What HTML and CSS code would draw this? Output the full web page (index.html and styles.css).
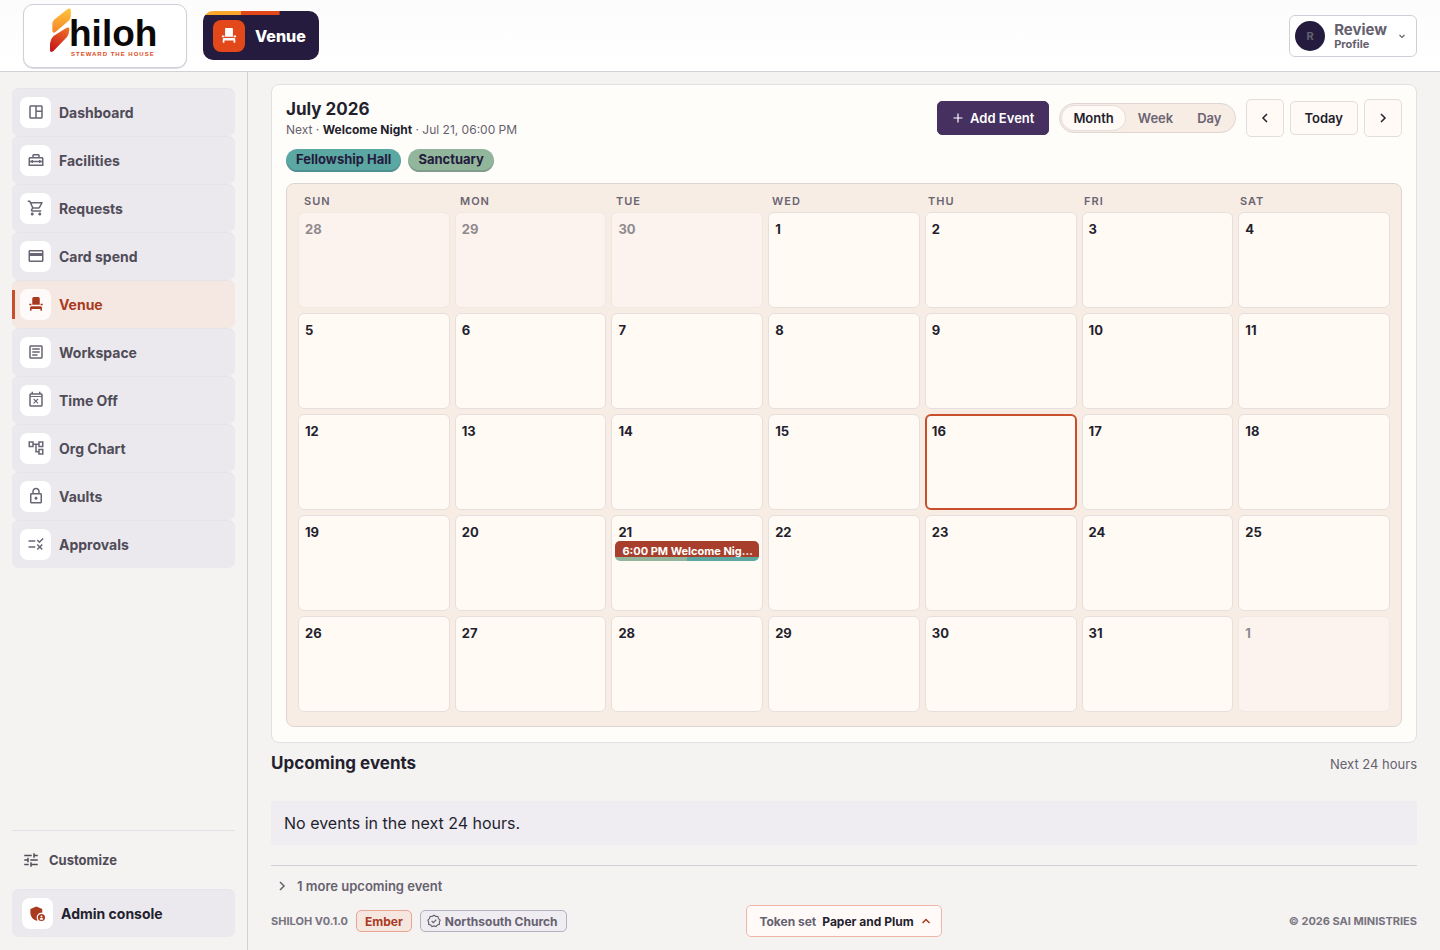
FILE: index.html
```
<!DOCTYPE html>
<html lang="en">
<head>
    <meta charset="UTF-8" />
    <meta name="viewport" content="width=device-width, initial-scale=1" />
    <title>Shiloh - Venue</title>
    <link rel="stylesheet" href="styles.css">
</head>
<body>
    <header class="topbar">
        <a class="logo" href="#" aria-label="Shiloh">
            <svg width="110" height="56" viewBox="0 0 110 56">
                <defs>
                    <linearGradient id="flame-top" x1="0" y1="0" x2="0" y2="1">
                        <stop offset="0" stop-color="#fdc43a" />
                        <stop offset="1" stop-color="#f6862a" />
                    </linearGradient>
                    <linearGradient id="flame-bottom" x1="0.7" y1="0" x2="0.3" y2="1">
                        <stop offset="0" stop-color="#ee6a24" />
                        <stop offset="1" stop-color="#c4161c" />
                    </linearGradient>
                </defs>
                <path fill="url(#flame-top)" d="M17 1.500Q20.800-1 20.800 2.500V8q0 3-2.500 5L5.500 24Q2.300 26 2.300 22v-5.500q0-3 2-5z" />
                <path fill="url(#flame-bottom)" d="M15.500 20.500Q19.500 18 19.300 21.500 19 26.500 17 29L3.500 43Q0 45.500 0 42v-6.500q.3-4.500 3.500-7.500z" />
                <text class="logo-name" x="19" y="38">hiloh</text>
                <text class="logo-tag" x="21" y="48">STEWARD THE HOUSE</text>
            </svg>
        </a>
        <div class="module">
            <span class="module-icon">
                <svg class="icon" width="20" height="20" viewBox="0 0 24 24"><path d="M7.300 3.500q0-1 1-1h7.400q1 0 1 1V13H7.300zM3.500 11.500h3v2h-3zM17.500 11.500h3v2h-3zM4.500 20v-4q0-1.500 1.500-1.500h12q1.500 0 1.500 1.500v4h-2v-2.500h-11V20z" /></svg>
            </span>
            <span class="module-name">Venue</span>
        </div>
        <button class="profile" type="button">
            <span class="avatar">R</span>
            <span class="profile-text">
                <span class="profile-name">Review</span>
                <span class="profile-label">Profile</span>
            </span>
            <svg class="line thin" width="12" height="12" viewBox="0 0 12 12"><path d="M3.500 5L6 7.500 8.500 5" /></svg>
        </button>
    </header>

    <div class="layout">
        <aside class="sidebar">
            <nav class="nav">
                <a class="nav-item" href="#"><span class="nav-icon"><svg class="icon" width="18" height="18" viewBox="0 0 24 24"><path d="M19 3H5c-1.100 0-2 .9-2 2v14c0 1.100.9 2 2 2h14c1.100 0 2-.9 2-2V5c0-1.100-.9-2-2-2zM5 19V5h6v14H5zm14 0h-6v-7h6v7zm0-9h-6V5h6v5z" /></svg></span>Dashboard</a>
                <a class="nav-item" href="#"><span class="nav-icon"><svg class="icon" width="18" height="18" viewBox="0 0 24 24"><path d="M20 8h-3V6c0-1.100-.9-2-2-2H9c-1.100 0-2 .9-2 2v2H4c-1.100 0-2 .9-2 2v10h20V10c0-1.100-.9-2-2-2zM9 6h6v2H9V6zm11 12H4v-3h2v1h2v-1h8v1h2v-1h2v3zm-2-5v-1h-2v1H8v-1H6v1H4v-3h16v3h-2z" /></svg></span>Facilities</a>
                <a class="nav-item" href="#"><span class="nav-icon"><svg class="icon" width="18" height="18" viewBox="0 0 24 24"><path d="M15.550 13c.75 0 1.410-.41 1.750-1.030l3.580-6.490A.996.996 0 0 0 20.010 4H5.210l-.94-2H1v2h2l3.600 7.590-1.350 2.440C4.520 15.370 5.480 17 7 17h12v-2H7l1.100-2h7.450zM6.160 6h12.150l-2.760 5H8.530L6.160 6zM7 18c-1.100 0-1.990.9-1.990 2S5.900 22 7 22s2-.9 2-2-.9-2-2-2zm10 0c-1.100 0-1.990.9-1.990 2s.89 2 1.990 2 2-.9 2-2-.9-2-2-2z" /></svg></span>Requests</a>
                <a class="nav-item" href="#"><span class="nav-icon"><svg class="icon" width="18" height="18" viewBox="0 0 24 24"><path d="M20 4H4c-1.110 0-1.990.89-1.990 2L2 18c0 1.110.89 2 2 2h16c1.110 0 2-.89 2-2V6c0-1.110-.89-2-2-2zm0 14H4v-6h16v6zm0-10H4V6h16v2z" /></svg></span>Card spend</a>
                <a class="nav-item active" href="#"><span class="nav-icon"><svg class="icon" width="18" height="18" viewBox="0 0 24 24"><path d="M7 4.500q0-2 2-2h6q2 0 2 2V13H7zM3 11.500h3v2H3zM18 11.500h3v2h-3zM4 21v-4q0-2 2-2h12q2 0 2 2v4h-2v-2.500H6V21z" /></svg></span>Venue</a>
                <a class="nav-item" href="#"><span class="nav-icon"><svg class="icon" width="18" height="18" viewBox="0 0 24 24"><path d="M19 5v14H5V5h14m0-2H5c-1.100 0-2 .9-2 2v14c0 1.100.9 2 2 2h14c1.100 0 2-.9 2-2V5c0-1.100-.9-2-2-2zM14 17H7v-2h7v2zm3-4H7v-2h10v2zm0-4H7V7h10v2z" /></svg></span>Workspace</a>
                <a class="nav-item" href="#"><span class="nav-icon"><svg class="icon" width="18" height="18" viewBox="0 0 24 24"><path d="M9.310 17l2.440-2.440L14.190 17l1.060-1.060-2.440-2.440 2.440-2.440L14.190 10l-2.440 2.440L9.310 10l-1.060 1.060 2.440 2.440-2.440 2.440L9.310 17zM19 3h-1V1h-2v2H8V1H6v2H5c-1.110 0-1.990.9-1.990 2L3 19c0 1.100.89 2 2 2h14c1.100 0 2-.9 2-2V5c0-1.100-.9-2-2-2zm0 16H5V8h14v11zM5 6.500V5h14v1.500z" /></svg></span>Time Off</a>
                <a class="nav-item" href="#"><span class="nav-icon"><svg class="icon" width="18" height="18" viewBox="0 0 24 24"><path d="M22 11V3h-7v3H9V3H2v8h7V8h2v10h4v3h7v-8h-7v3h-2V8h2v3h7zM7 9H4V5h3v4zm10 6h3v4h-3v-4zm0-10h3v4h-3V5z" /></svg></span>Org Chart</a>
                <a class="nav-item" href="#"><span class="nav-icon"><svg class="icon" width="18" height="18" viewBox="0 0 24 24"><path d="M18 8h-1V6c0-2.760-2.240-5-5-5S7 3.240 7 6v2H6c-1.100 0-2 .9-2 2v10c0 1.100.9 2 2 2h12c1.100 0 2-.9 2-2V10c0-1.100-.9-2-2-2zM9 6c0-1.660 1.340-3 3-3s3 1.340 3 3v2H9V6zm9 14H6V10h12v10zm-6-3c1.100 0 2-.9 2-2s-.9-2-2-2-2 .9-2 2 .9 2 2 2z" /></svg></span>Vaults</a>
                <a class="nav-item" href="#"><span class="nav-icon"><svg class="icon" width="18" height="18" viewBox="0 0 24 24"><path d="M16.540 11L13 7.460l1.410-1.410 2.120 2.120 4.240-4.240 1.410 1.410L16.540 11zM11 7H2v2h9V7zm10 6.410L19.590 12 17 14.590 14.410 12 13 13.410 15.590 16 13 18.590 14.410 20 17 17.410 19.590 20 21 18.590 18.410 16 21 13.410zM11 15H2v2h9v-2z" /></svg></span>Approvals</a>
            </nav>
            <div class="sidebar-bottom">
                <button class="customize" type="button">
                    <svg class="icon" width="18" height="18" viewBox="0 0 24 24"><path d="M3 17v2h6v-2H3zM3 5v2h10V5H3zm10 16v-2h8v-2h-8v-2h-2v6h2zM7 9v2H3v2h4v2h2V9H7zm14 4v-2H11v2h10zm-6-4h2V7h4V5h-4V3h-2v6z" /></svg>
                    Customize
                </button>
                <a class="nav-item admin" href="#"><span class="nav-icon"><svg class="icon" width="19" height="19" viewBox="0 0 24 24"><path d="M17 11c.34 0 .67.04 1 .09V6.270L10.500 3 3 6.270v4.910c0 4.540 3.200 8.790 7.500 9.820.55-.13 1.080-.32 1.600-.55A5.970 5.970 0 0 1 11 17c0-3.310 2.690-6 6-6z" /><path d="M17 12.500a4.500 4.500 0 1 0 0 9 4.500 4.500 0 0 0 0-9zm0 1.900a1.300 1.300 0 1 1 0 2.600 1.300 1.300 0 0 1 0-2.600zm0 5.600c-.95 0-1.800-.5-2.300-1.200.1-.6 1.400-1 2.300-1s2.200.4 2.300 1c-.5.7-1.350 1.200-2.300 1.200z" /></svg></span>Admin console</a>
            </div>
        </aside>

        <main class="content">
            <section class="card">
                <div class="card-head">
                    <div>
                        <h1>July 2026</h1>
                        <p class="next">Next · <strong>Welcome Night</strong> · Jul 21, 06:00 PM</p>
                    </div>
                    <div class="tools">
                        <button class="btn btn-primary" type="button">
                            <svg class="line thin" width="12" height="12" viewBox="0 0 12 12"><path d="M6 1.500v9M1.500 6h9" /></svg>
                            Add Event
                        </button>
                        <div class="switch">
                            <button class="switch-item on" type="button">Month</button>
                            <button class="switch-item" type="button">Week</button>
                            <button class="switch-item" type="button">Day</button>
                        </div>
                        <div class="pager">
                            <button class="btn btn-step" type="button" aria-label="Previous month"><svg class="line" width="12" height="12" viewBox="0 0 12 12"><path d="M8 2L4 6l4 4" /></svg></button>
                            <button class="btn" type="button">Today</button>
                            <button class="btn btn-step" type="button" aria-label="Next month"><svg class="line" width="12" height="12" viewBox="0 0 12 12"><path d="M4 2l4 4-4 4" /></svg></button>
                        </div>
                    </div>
                </div>
                <div class="chips">
                    <button class="chip teal" type="button">Fellowship Hall</button>
                    <button class="chip green" type="button">Sanctuary</button>
                </div>
                <div class="calendar">
                    <div class="weekdays">
                        <span>SUN</span><span>MON</span><span>TUE</span><span>WED</span><span>THU</span><span>FRI</span><span>SAT</span>
                    </div>
                    <div class="days">
                        <div class="day out">28</div>
                        <div class="day out">29</div>
                        <div class="day out">30</div>
                        <div class="day">1</div>
                        <div class="day">2</div>
                        <div class="day">3</div>
                        <div class="day">4</div>
                        <div class="day">5</div>
                        <div class="day">6</div>
                        <div class="day">7</div>
                        <div class="day">8</div>
                        <div class="day">9</div>
                        <div class="day">10</div>
                        <div class="day">11</div>
                        <div class="day">12</div>
                        <div class="day">13</div>
                        <div class="day">14</div>
                        <div class="day">15</div>
                        <div class="day today">16</div>
                        <div class="day">17</div>
                        <div class="day">18</div>
                        <div class="day">19</div>
                        <div class="day">20</div>
                        <div class="day">21<a class="event" href="#">6:00 PM Welcome Nig…</a></div>
                        <div class="day">22</div>
                        <div class="day">23</div>
                        <div class="day">24</div>
                        <div class="day">25</div>
                        <div class="day">26</div>
                        <div class="day">27</div>
                        <div class="day">28</div>
                        <div class="day">29</div>
                        <div class="day">30</div>
                        <div class="day">31</div>
                        <div class="day out">1</div>
                    </div>
                </div>
            </section>

            <section class="upcoming">
                <div class="upcoming-head">
                    <h2>Upcoming events</h2>
                    <span class="range">Next 24 hours</span>
                </div>
                <p class="empty">No events in the next 24 hours.</p>
                <button class="more" type="button">
                    <svg class="line" width="12" height="12" viewBox="0 0 12 12"><path d="M4 2l4 4-4 4" /></svg>
                    1 more upcoming event
                </button>
            </section>

            <footer class="footer">
                <div class="footer-left">
                    <span class="caps">SHILOH V0.1.0</span>
                    <span class="tag ember">Ember</span>
                    <span class="tag">
                        <svg class="line" width="14" height="14" viewBox="0 0 24 24"><path d="M12 2l3 2.200 3.700.1 1 3.500L22.500 10.500 21.200 14l.1 3.600-3.500 1.100L15.500 21.500 12 20.500 8.500 21.500 6.200 18.700 2.700 17.600l.1-3.600L1.500 10.500l2.800-2.700 1-3.500L9 4.200zM8 12l3 3 5-5.500" /></svg>
                        Northsouth Church
                    </span>
                </div>
                <button class="token" type="button">
                    <span class="token-label">Token set</span>
                    Paper and Plum
                    <svg class="line" width="12" height="12" viewBox="0 0 12 12"><path d="M2.500 8L6 4.500 9.500 8" /></svg>
                </button>
                <span class="caps copyright">© 2026 SAI MINISTRIES</span>
            </footer>
        </main>
    </div>
</body>
</html>
```
FILE: styles.css
```
* {
    box-sizing: border-box;
}
body {
    margin: 0;
    min-height: 100vh;
    display: flex;
    flex-direction: column;
    background: #f4f3f1;
    color: #241f2e;
    font-family: Inter, "Liberation Sans", sans-serif;
    font-size: 13px;
}
h1, h2, p {
    margin: 0;
}
a {
    color: inherit;
    text-decoration: none;
}
button {
    font: inherit;
    color: inherit;
    cursor: pointer;
}
svg {
    flex: none;
    display: block;
}
.icon {
    fill: currentColor;
}
.line {
    fill: none;
    stroke: currentColor;
    stroke-width: 1.5;
}
.thin {
    stroke-width: 1.2;
}

/* top bar */
.topbar {
    height: 72px;
    display: flex;
    align-items: center;
    gap: 16px;
    padding: 0 23px;
    background: linear-gradient(#fdfcfd, #fff);
    border-bottom: 1px solid #d3d1d8;
}
.logo {
    width: 164px;
    height: 64px;
    display: flex;
    align-items: center;
    justify-content: center;
    background: #fff;
    border: 1px solid #d0cfd9;
    border-radius: 10px;
    box-shadow: 0 1px 1px #dddbe3;
}
.logo-name {
    font: bold 37px "Liberation Sans", sans-serif;
    fill: #0b0808;
}
.logo-tag {
    font: bold 6px "Liberation Sans", sans-serif;
    letter-spacing: 1px;
    fill: #dd4a20;
}
.module {
    height: 49px;
    display: flex;
    align-items: center;
    gap: 10px;
    padding: 0 13px 0 10px;
    border-radius: 10px;
    background: linear-gradient(90deg, #fba72d 50%, #e2481a 50%) no-repeat 0 0 / 66% 4px, #241b3e;
    color: #fff;
}
.module-icon {
    width: 32px;
    height: 32px;
    display: grid;
    place-items: center;
    border-radius: 8px;
    background: #e2481a;
}
.module-name {
    font-size: 16px;
    font-weight: 800;
}
.profile {
    height: 42px;
    margin-left: auto;
    display: flex;
    align-items: center;
    gap: 9px;
    padding: 0 8px 0 5px;
    background: #fff;
    border: 1px solid #d0cfd9;
    border-radius: 6px;
    color: #66616f;
    text-align: left;
}
.avatar {
    width: 30px;
    height: 30px;
    display: grid;
    place-items: center;
    border-radius: 50%;
    background: #241b3e;
    font-size: 11px;
    font-weight: 700;
}
.profile-text {
    display: grid;
    font-weight: 700;
}
.profile-name {
    font-size: 15px;
    line-height: 17px;
}
.profile-label {
    font-size: 11px;
    line-height: 13px;
}

/* sidebar */
.layout {
    flex: 1;
    display: flex;
}
.sidebar {
    width: 248px;
    flex: none;
    display: flex;
    flex-direction: column;
    justify-content: space-between;
    padding: 16px 12px 13px;
    border-right: 1px solid #d3d1d8;
}
.nav-item {
    height: 48px;
    display: flex;
    align-items: center;
    gap: 8px;
    padding: 0 8px 1px;
    border-top: 1px solid #e6e3ea;
    border-radius: 7px;
    background: #ebe9ee;
    color: #504c58;
    font-size: 14px;
    font-weight: 700;
}
.nav-icon {
    width: 31px;
    height: 31px;
    display: grid;
    place-items: center;
    border-radius: 8px;
    background: #fff;
    color: #6a6575;
}
.nav-item.active {
    background: linear-gradient(#c84e2c, #c84e2c) no-repeat 0 50% / 3px 29px, #f5e7e2;
    color: #a93a20;
}
.active .nav-icon {
    background: #fefaf9;
    color: #a93a20;
}
.sidebar-bottom {
    border-top: 1px solid #e3e1e7;
}
.customize {
    height: 58px;
    display: flex;
    align-items: center;
    gap: 9px;
    padding: 0 10px;
    background: none;
    border: 0;
    color: #504c58;
    font-weight: 700;
}
.admin {
    padding: 0 10px 1px;
    color: #241f2e;
}
.admin .nav-icon {
    color: #a93a20;
}

/* calendar */
.content {
    flex: 1;
    min-width: 0;
    padding: 12px 23px;
}
.card {
    padding: 14px 14px 15px;
    background: #fffdf9;
    border: 1px solid #e2e0e3;
    border-radius: 8px;
}
.card-head {
    display: flex;
    justify-content: space-between;
    align-items: flex-start;
}
h1, h2 {
    font-size: 17px;
    line-height: 22px;
    font-weight: 700;
}
h1 {
    line-height: 20px;
}
.next {
    font-size: 12px;
    line-height: 22px;
    color: #66616f;
}
.next strong {
    color: #241f2e;
}
.tools {
    display: flex;
    align-items: center;
    gap: 10px;
}
.btn {
    height: 34px;
    display: flex;
    align-items: center;
    justify-content: center;
    gap: 6px;
    padding: 0 14px;
    background: #fffaf5;
    border: 1px solid #e3dddc;
    border-radius: 5px;
    font-weight: 600;
}
.btn-primary {
    background: #45305f;
    border-color: #45305f;
    color: #fff;
}
.btn-step {
    width: 38px;
    height: 38px;
    padding: 0;
}
.switch {
    height: 30px;
    display: flex;
    padding: 1px;
    background: #f7ede5;
    border: 1px solid #dfd6d2;
    border-radius: 15px;
}
.switch-item {
    padding: 0 11px;
    background: none;
    border: 1px solid transparent;
    border-radius: 13px;
    color: #6b6472;
    font-weight: 600;
}
.switch-item.on {
    background: #fffaf5;
    border-color: #e3dddc;
    color: #241f2e;
}
.pager {
    display: flex;
    align-items: center;
    gap: 6px;
}
.chips {
    display: flex;
    gap: 7px;
    margin: 8px 0 11px;
}
.chip {
    height: 23px;
    padding: 0 10px 3px;
    border: 0;
    border-radius: 12px;
    box-shadow: inset 0 -2px 0 rgba(36, 27, 62, 0.16);
    color: #241b3e;
    font-weight: 700;
}
.teal {
    background: #5ba7a2;
}
.green {
    background: #92b69b;
}
.calendar {
    padding: 8px 11px 14px;
    background: #f7ede5;
    border: 1px solid #ddd5d1;
    border-radius: 8px;
}
.weekdays {
    display: grid;
    grid-template-columns: repeat(7, 1fr);
    padding-bottom: 2px;
}
.weekdays span {
    padding-left: 6px;
    color: #6b6472;
    font-size: 11px;
    line-height: 18px;
    font-weight: 600;
    letter-spacing: 1px;
}
.days {
    display: grid;
    grid-template-columns: repeat(7, minmax(0, 1fr));
    grid-auto-rows: 96px;
    gap: 5px;
}
.day {
    padding: 8px 3px;
    text-indent: 3px;
    background: #fffaf4;
    border: 1px solid #e6dfdd;
    border-radius: 6px;
    line-height: 17px;
    font-weight: 700;
}
.day.out {
    background: #fcf3ee;
    border-color: #f1e8e4;
    color: #8f8a8d;
}
.day.today {
    padding: 7px 2px;
    border: 2px solid #c84e2c;
}
.event {
    display: block;
    height: 20px;
    padding: 0 4px 0 7px;
    overflow: hidden;
    white-space: nowrap;
    text-indent: 0;
    border-radius: 5px;
    background: linear-gradient(90deg, #92b69b 50%, #5ba7a2 50%) no-repeat 0 100% / 100% 4px, #a83f2c;
    color: #fff;
    font-size: 11px;
    line-height: 20px;
}

/* upcoming */
.upcoming-head {
    display: flex;
    justify-content: space-between;
    align-items: baseline;
    padding: 9px 0 27px;
}
.range {
    color: #66616f;
}
.empty {
    padding: 0 13px;
    border-radius: 3px;
    background: #efedf2;
    font-size: 16px;
    line-height: 44px;
}
.more {
    width: 100%;
    height: 40px;
    margin-top: 20px;
    display: flex;
    align-items: center;
    gap: 9px;
    padding: 0 5px;
    background: none;
    border: 0;
    border-top: 1px solid #d3d1d8;
    color: #66616f;
    font-weight: 600;
}

/* footer */
.footer {
    display: grid;
    grid-template-columns: 1fr auto 1fr;
    align-items: center;
}
.footer-left {
    display: flex;
    align-items: center;
    gap: 8px;
}
.caps {
    color: #77727f;
    font-size: 11px;
    font-weight: 700;
}
.copyright {
    text-align: right;
}
.tag {
    height: 22px;
    display: flex;
    align-items: center;
    gap: 4px;
    padding: 0 8px 0 6px;
    border: 1px solid #b4b0c0;
    border-radius: 5px;
    background: #efedf2;
    color: #66616f;
    font-size: 12px;
    font-weight: 700;
}
.tag .line {
    stroke-width: 2;
}
.ember {
    padding: 0 8px;
    background: #f6e6e0;
    border-color: #e8a593;
    color: #a93a20;
}
.token {
    height: 32px;
    display: flex;
    align-items: center;
    gap: 6px;
    padding: 0 9px 0 12px;
    background: #fffaf8;
    border: 1px solid #efb5a5;
    border-radius: 5px;
    font-size: 12px;
    font-weight: 700;
}
.token-label {
    color: #66616f;
}
.token .line {
    color: #a93a20;
}
```
